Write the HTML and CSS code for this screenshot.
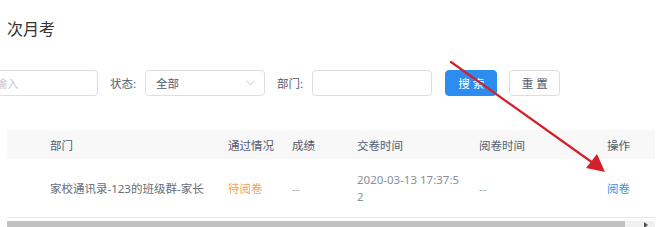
FILE: index.html
```html
<!DOCTYPE html>
<html lang="zh">
<head>
<meta charset="utf-8">
<title>次月考</title>
<link rel="stylesheet" href="styles.css">
</head>
<body>
<div class="page">
  <h1 class="title">次月考</h1>
  <div class="filters">
    <div class="input first"><span class="placeholder">请输入</span></div>
    <label class="label">状态:</label>
    <div class="input select"><span class="value">全部</span>
      <svg class="chev" width="9" height="6" viewBox="0 0 9 6"><polyline points="0.5,0.5 4.5,5 8.5,0.5" fill="none" stroke="#c5c8ce" stroke-width="1"/></svg>
    </div>
    <label class="label">部门:</label>
    <div class="input dept"></div>
    <button class="btn primary">搜 索</button>
    <button class="btn reset">重 置</button>
  </div>
  <div class="table-wrap">
    <table class="table">
      <colgroup>
        <col style="width:27px"><col style="width:178px"><col style="width:64px"><col style="width:65px"><col style="width:122px"><col style="width:128px"><col style="width:64px">
      </colgroup>
      <thead>
        <tr><th></th><th>部门</th><th>通过情况</th><th>成绩</th><th>交卷时间</th><th>阅卷时间</th><th>操作</th></tr>
      </thead>
      <tbody>
        <tr><td></td><td>家校通讯录-123的班级群-家长</td><td class="pending">待阅卷</td><td class="dash">--</td><td class="time">2020-03-13 17:37:52</td><td class="dash">--</td><td><a class="link">阅卷</a></td></tr>
      </tbody>
    </table>
    <div class="scrollbar"><div class="thumb"></div><div class="track"><span class="arrow"></span></div></div>
  </div>
  <svg class="annot" width="664" height="227" viewBox="0 0 664 227">
    <line x1="451" y1="62" x2="593" y2="163" stroke="#d4202b" stroke-width="2.2" stroke-linecap="round"/>
    <polygon points="605,172 586,168 597,154" fill="#d4202b"/>
  </svg>
</div>
</body>
</html>
```
FILE: styles.css
```css
html, body { margin: 0; padding: 0; background: #fff; }
body { font-family: "Noto Sans", "Noto Sans CJK SC", sans-serif; color: #515a6e; overflow: hidden; }
.page { position: relative; width: 664px; height: 227px; padding-left: 7px; box-sizing: border-box; overflow: hidden; }
.title { margin: 0; padding-top: 20px; font-size: 16px; line-height: 18px; font-weight: normal; color: #333; height: 18px; }
.filters { display: flex; align-items: center; margin-top: 32px; height: 26px; font-size: 11.5px; }
.input { box-sizing: border-box; height: 26px; border: 1px solid #dcdee2; border-radius: 4px; display: flex; align-items: center; padding: 0 7px; background: #fff; }
.input.first { width: 120px; margin-left: -29px; padding-left: 5px; }
.placeholder { color: #c5c8ce; }
.label { margin-left: 12px; margin-right: 9px; color: #515a6e; }
.select { width: 120px; justify-content: space-between; padding: 0 9px 0 10px; color: #515a6e; }
.chev { display: block; }
.dept { width: 120px; }
.btn { font-family: inherit; font-size: 11.5px; height: 26px; border-radius: 4px; border: 1px solid #dcdee2; background: #fff; color: #515a6e; margin-left: 13px; padding: 0; width: 51px; cursor: pointer; }
.btn.primary { background: #2d8cf0; border-color: #2d8cf0; color: #fff; width: 52px; }
.btn.reset { margin-left: 12px; }
.table-wrap { margin-top: 34px; width: 648px; }
.table { width: 648px; border-collapse: collapse; table-layout: fixed; font-size: 11.5px; }
.table th { height: 29px; background: #f8f8f9; font-weight: normal; text-align: left; padding: 0 0 0 16px; color: #515a6e; }
.table td { height: 58px; padding: 0 0 0 16px; border-bottom: 1px solid #e8eaec; color: #666c7a; line-height: 17px; word-break: break-all; }
.table .pending { color: #f5a04d; }
.table .dash { color: #a0a4ac; }
.table .time { color: #8a8f99; }
.link { color: #3a92e0; }
.scrollbar { display: flex; margin-top: 3px; height: 8px; }
.thumb { width: 618px; background: #c1c1c1; }
.track { flex: 1; background: #f1f1f1; position: relative; }
.arrow { position: absolute; left: 19px; top: 1px; width: 0; height: 0; border-left: 4px solid #505050; border-top: 3px solid transparent; border-bottom: 3px solid transparent; }
.annot { position: absolute; left: 0; top: 0; pointer-events: none; }
```
